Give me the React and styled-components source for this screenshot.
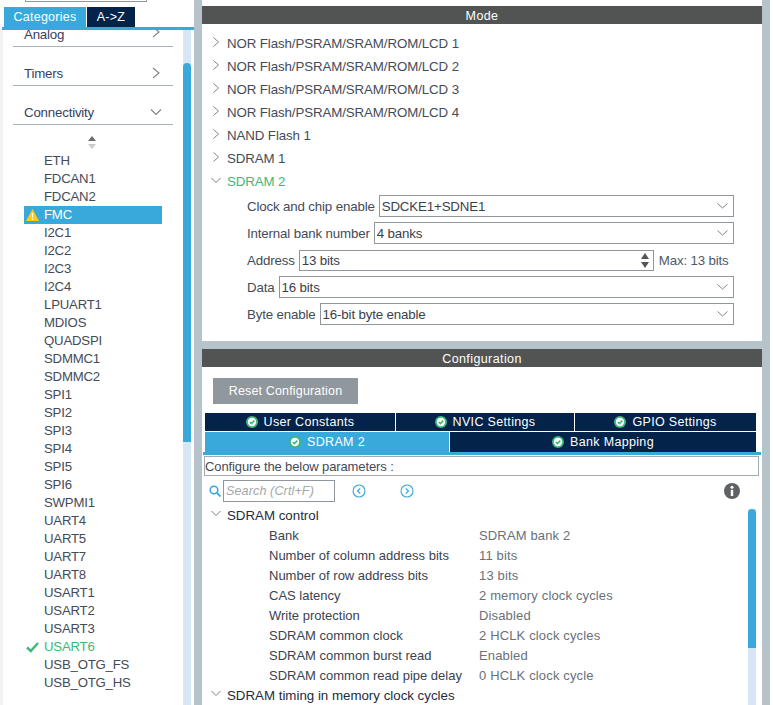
import React from 'react';
import styled, { createGlobalStyle } from 'styled-components';

const GlobalStyle = createGlobalStyle`
  html, body {
    margin: 0;
    padding: 0;
    background: #fff;
  }
  * {
    box-sizing: border-box;
  }
`;

const BLUE = '#39a9dc';
const NAVY = '#03234b';
const GREY = '#b7c3ca';
const GREEN = '#3cb878';
const TEXT = '#444b57';

const Page = styled.div`
  width: 773px;
  height: 705px;
  overflow: hidden;
  display: flex;
  font-family: 'Liberation Sans', Arial, sans-serif;
  font-size: 13.3px;
  letter-spacing: 0;
  color: ${TEXT};
  background: #fff;
`;

const Sidebar = styled.aside`
  width: 194px;
  flex: none;
  display: flex;
  flex-direction: column;
  background: #fff;
`;

const SearchStub = styled.div`
  width: 122px;
  height: 2px;
  margin-left: 25px;
  border: 1px solid #8f969c;
  border-top: 0;
`;

const TabStrip = styled.div`
  display: flex;
  gap: 1px;
  margin: 5px 0 0 4px;
  height: 20px;
`;

const TopTab = styled.div`
  width: ${p => p.$w}px;
  background: ${p => (p.$active ? BLUE : NAVY)};
  color: #fff;
  font-size: 12.5px;
  letter-spacing: 0.25px;
  line-height: 20px;
  text-align: center;
`;

const TabRule = styled.div`
  height: 3px;
  margin-left: 2px;
  background: ${BLUE};
`;

const SideBody = styled.div`
  flex: 1;
  min-height: 0;
  display: flex;
  padding-left: 3px;
  background: linear-gradient(to right, #f2f2f2 3px, #fff 3px);
`;

const SideScroll = styled.div`
  width: 180px;
  flex: none;
  overflow: hidden;
`;

const Category = styled.div`
  height: ${p => p.$h}px;
  margin-left: 10px;
  width: 160px;
  padding: 0 11px;
  border-bottom: 1px solid #a9b3ba;
  display: flex;
  align-items: flex-end;
  justify-content: space-between;
  overflow: hidden;
  color: #37415f;
  font-size: 13.3px;
  letter-spacing: -0.2px;
  line-height: 23px;
`;

const CatChevron = styled.svg`
  width: 12px;
  height: 12px;
  margin: 0 0 ${p => p.$mb}px 0;
  flex: none;
  fill: none;
  stroke: #7d8388;
  stroke-width: 1.1;
`;

const SortMark = styled.svg`
  display: block;
  width: 10px;
  height: 13px;
  margin: 11px 0 0 84px;
`;

const PeriphList = styled.ul`
  list-style: none;
  margin: 3px 0 0 21px;
  padding: 0;
  width: 138px;
`;

const Periph = styled.li`
  height: 18px;
  line-height: 18px;
  padding-left: 20px;
  position: relative;
  font-size: 13.2px;
  letter-spacing: -0.2px;
  background: ${p => (p.$selected ? BLUE : 'transparent')};
  color: ${p => (p.$selected ? '#fff' : p.$ok ? GREEN : TEXT)};
`;

const PeriphIcon = styled.svg`
  position: absolute;
  left: 2px;
  top: 3px;
  width: 13px;
  height: 12px;
`;

const Track = styled.div`
  width: 8px;
  flex: none;
  background: #d6e6f4;
  padding-top: ${p => p.$top}px;
`;

const Thumb = styled.div`
  height: ${p => p.$h}px;
  background: ${BLUE};
  border-radius: 4px 4px 0 0;
`;

const Gutter = styled.div`
  width: 8px;
  flex: none;
  background: ${GREY};
`;

const Main = styled.main`
  width: 560px;
  flex: none;
  display: flex;
  flex-direction: column;
`;

const ModePanel = styled.section`
  height: 341px;
  flex: none;
  padding-top: 6px;
  background: #fff;
`;

const PanelTitle = styled.h2`
  margin: 0;
  height: 18px;
  background: #525453;
  color: #fff;
  font-size: 12.5px;
  font-weight: 400;
  letter-spacing: 0.4px;
  line-height: 20px;
  text-align: center;
`;

const Tree = styled.div`
  padding: 8px 0 0 9px;
`;

const TreeRow = styled.div`
  height: 23px;
  display: flex;
  align-items: center;
  gap: 6px;
  font-size: 13.3px;
  letter-spacing: -0.1px;
  color: ${p => (p.$active ? GREEN : TEXT)};
`;

const TreeChevron = styled.svg`
  width: 10px;
  height: 10px;
  margin-top: -4px;
  flex: none;
  fill: none;
  stroke: #7d8388;
  stroke-width: 1;
`;

const FormBlock = styled.div`
  padding: 2px 28px 0 45px;
  display: flex;
  flex-direction: column;
  gap: 5px;
`;

const FormRow = styled.div`
  height: 22px;
  display: flex;
  align-items: center;
  gap: 4px;
  font-size: 13.3px;
  letter-spacing: -0.15px;
  white-space: nowrap;
`;

const Field = styled.div`
  flex: 1;
  height: 22px;
  display: flex;
  align-items: center;
  justify-content: space-between;
  padding: 0 5px 0 2px;
  border: 1px solid #8f969c;
  color: #3a3f4a;
`;

const SpinField = styled(Field)`
  flex: none;
  width: 355px;
  height: 21px;
  padding: 0 4px 0 2px;
`;

const MaxNote = styled.span`
  margin-left: 1px;
  color: #4f5a68;
`;

const FieldIcon = styled.svg`
  flex: none;
  fill: none;
  stroke: #80868b;
  stroke-width: 1;
`;

const PanelGap = styled.div`
  height: 8px;
  flex: none;
  background: ${GREY};
`;

const ConfigPanel = styled.section`
  flex: 1;
  min-height: 0;
  display: flex;
  flex-direction: column;
  overflow: hidden;
  background: #fff;
`;

const ResetButton = styled.button`
  display: block;
  width: 145px;
  height: 26px;
  margin: 11px 0 0 11px;
  padding: 0;
  border: 0;
  background: #90979d;
  color: #fff;
  font-family: inherit;
  font-size: 12.5px;
  letter-spacing: 0.16px;
`;

const TabRows = styled.div`
  margin: 9px 0 0 3px;
  width: 551px;
  display: flex;
  flex-direction: column;
  gap: 1px;
`;

const TabRow = styled.div`
  display: flex;
  gap: 1px;
  height: ${p => p.$h}px;
`;

const ConfigTab = styled.div`
  width: ${p => p.$w}px;
  display: flex;
  align-items: center;
  justify-content: center;
  gap: 6px;
  background: ${p => (p.$active ? BLUE : NAVY)};
  color: #fff;
  font-size: 12.5px;
  letter-spacing: 0.33px;
`;

const OkIcon = styled.svg`
  width: 12px;
  height: 12px;
  flex: none;
`;

const BlueRule = styled.div`
  height: 3px;
  width: 558px;
  margin-left: 1px;
  flex: none;
  background: ${BLUE};
`;

const HintBox = styled.div`
  height: 20px;
  width: 555px;
  margin: 1px 0 0 2px;
  flex: none;
  padding-left: 0;
  border: 1px solid #a3abb1;
  line-height: 19px;
  font-size: 13px;
  letter-spacing: -0.11px;
`;

const SearchRow = styled.div`
  height: 22px;
  flex: none;
  margin: 4px 0 0 7px;
  width: 531px;
  display: flex;
  align-items: center;
`;

const SearchIcon = styled.svg`
  width: 12px;
  height: 12px;
  margin-right: 2px;
  flex: none;
`;

const SearchBox = styled.div`
  width: 112px;
  height: 22px;
  border: 1px solid #8f969c;
  padding-left: 2px;
  line-height: 20px;
  color: #a4a8ac;
  font-size: 12.6px;
  font-style: italic;
  letter-spacing: 0.1px;
`;

const NavButton = styled.svg`
  width: 14px;
  height: 14px;
  margin-left: ${p => p.$ml}px;
  flex: none;
  fill: none;
  stroke: ${BLUE};
`;

const InfoIcon = styled.svg`
  width: 16px;
  height: 16px;
  margin-left: auto;
  flex: none;
`;

const ParamArea = styled.div`
  flex: 1;
  min-height: 0;
  display: flex;
  padding-top: 3px;
`;

const ParamList = styled.div`
  width: 546px;
  flex: none;
  overflow: hidden;
  padding-left: 9px;
`;

const ParamHead = styled.div`
  height: 20px;
  display: flex;
  align-items: center;
  gap: 6px;
  color: #222b3d;
  font-size: 13.3px;
`;

const ParamRow = styled.div`
  height: 20px;
  display: flex;
  align-items: center;
  padding-left: 58px;
  font-size: 13px;
`;

const ParamName = styled.span`
  width: 210px;
  flex: none;
  color: #3b4250;
`;

const ParamValue = styled.span`
  color: #6a7079;
  letter-spacing: 0.15px;
`;

const ParamTrack = styled(Track)`
  background: linear-gradient(to bottom, #fff 4px, #d6e6f4 4px);
`;

const periphs = [
  'ETH', 'FDCAN1', 'FDCAN2', 'FMC', 'I2C1', 'I2C2', 'I2C3', 'I2C4', 'LPUART1', 'MDIOS',
  'QUADSPI', 'SDMMC1', 'SDMMC2', 'SPI1', 'SPI2', 'SPI3', 'SPI4', 'SPI5', 'SPI6', 'SWPMI1',
  'UART4', 'UART5', 'UART7', 'UART8', 'USART1', 'USART2', 'USART3', 'USART6', 'USB_OTG_FS',
  'USB_OTG_HS',
];

const modes = [
  'NOR Flash/PSRAM/SRAM/ROM/LCD 1',
  'NOR Flash/PSRAM/SRAM/ROM/LCD 2',
  'NOR Flash/PSRAM/SRAM/ROM/LCD 3',
  'NOR Flash/PSRAM/SRAM/ROM/LCD 4',
  'NAND Flash 1',
  'SDRAM 1',
];

const params = [
  ['Bank', 'SDRAM bank 2'],
  ['Number of column address bits', '11 bits'],
  ['Number of row address bits', '13 bits'],
  ['CAS latency', '2 memory clock cycles'],
  ['Write protection', 'Disabled'],
  ['SDRAM common clock', '2 HCLK clock cycles'],
  ['SDRAM common burst read', 'Enabled'],
  ['SDRAM common read pipe delay', '0 HCLK clock cycle'],
];

const Right = () => <TreeChevron viewBox="0 0 10 10"><path d="M2.5 0.5 L7.5 5 L2.5 9.5" /></TreeChevron>;
const Down = () => <TreeChevron viewBox="0 0 10 10"><path d="M0.5 3 L5 7.5 L9.5 3" /></TreeChevron>;

const SelectArrow = () => (
  <FieldIcon width="11" height="6" viewBox="0 0 11 6"><path d="M0.5 0.5 L5.5 5 L10.5 0.5" /></FieldIcon>
);

const Ok = () => (
  <OkIcon viewBox="0 0 12 12">
    <circle cx="6" cy="6" r="6" fill="#3cb878" />
    <circle cx="6" cy="6" r="4.2" fill="#fff" />
    <path d="M3.8 6 L5.4 7.6 L8.3 4.6" fill="none" stroke="#3cb878" strokeWidth="1.6" />
  </OkIcon>
);

const PeriphMark = ({ name }) => {
  if (name === 'FMC') {
    return (
      <PeriphIcon viewBox="0 0 13 12">
        <path d="M6.5 0 L13 12 L0 12 Z" fill="#fbcf0a" />
        <path d="M6.5 4 V8.5 M6.5 9.5 V11" stroke="#fff" strokeWidth="1.2" />
      </PeriphIcon>
    );
  }
  if (name === 'USART6') {
    return (
      <PeriphIcon viewBox="0 0 13 12">
        <path d="M1 6.5 L4.8 10 L12 2" fill="none" stroke="#3cb878" strokeWidth="2.4" />
      </PeriphIcon>
    );
  }
  return null;
};

export default function App() {
  return (
    <Page>
      <GlobalStyle />
      <Sidebar>
        <SearchStub />
        <TabStrip>
          <TopTab $active $w={82}>Categories</TopTab>
          <TopTab $w={48}>A-&gt;Z</TopTab>
        </TabStrip>
        <TabRule />
        <SideBody>
          <SideScroll>
            <Category $h={17}>
              Analog
              <CatChevron $mb={8} viewBox="0 0 12 12"><path d="M3 1 L9 6 L3 11" /></CatChevron>
            </Category>
            <Category $h={39}>
              Timers
              <CatChevron $mb={6} viewBox="0 0 12 12"><path d="M3 1 L9 6 L3 11" /></CatChevron>
            </Category>
            <Category $h={39}>
              Connectivity
              <CatChevron $mb={6} viewBox="0 0 12 12"><path d="M1 3.5 L6 8.5 L11 3.5" /></CatChevron>
            </Category>
            <SortMark viewBox="0 0 10 13">
              <path d="M5 0 L9 5 H1 Z" fill="#6a6e72" />
              <path d="M5 13 L9 8 H1 Z" fill="#c9cccf" />
            </SortMark>
            <PeriphList>
              {periphs.map(name => (
                <Periph key={name} $selected={name === 'FMC'} $ok={name === 'USART6'}>
                  <PeriphMark name={name} />
                  {name}
                </Periph>
              ))}
            </PeriphList>
          </SideScroll>
          <Track $top={33}><Thumb $h={379} /></Track>
        </SideBody>
      </Sidebar>
      <Gutter />
      <Main>
        <ModePanel>
          <PanelTitle>Mode</PanelTitle>
          <Tree>
            {modes.map(m => (
              <TreeRow key={m}><Right />{m}</TreeRow>
            ))}
            <TreeRow $active><Down />SDRAM 2</TreeRow>
          </Tree>
          <FormBlock>
            <FormRow>
              Clock and chip enable
              <Field>SDCKE1+SDNE1<SelectArrow /></Field>
            </FormRow>
            <FormRow>
              Internal bank number
              <Field>4 banks<SelectArrow /></Field>
            </FormRow>
            <FormRow>
              Address
              <SpinField>
                13 bits
                <FieldIcon width="8" height="15" viewBox="0 0 8 15">
                  <path d="M4 0 L8 6 H0 Z" fill="#555" stroke="none" />
                  <path d="M4 15 L8 9 H0 Z" fill="#555" stroke="none" />
                </FieldIcon>
              </SpinField>
              <MaxNote>Max: 13 bits</MaxNote>
            </FormRow>
            <FormRow>
              Data
              <Field>16 bits<SelectArrow /></Field>
            </FormRow>
            <FormRow>
              Byte enable
              <Field>16-bit byte enable<SelectArrow /></Field>
            </FormRow>
          </FormBlock>
        </ModePanel>
        <PanelGap />
        <ConfigPanel>
          <PanelTitle>Configuration</PanelTitle>
          <ResetButton>Reset Configuration</ResetButton>
          <TabRows>
            <TabRow $h={18}>
              <ConfigTab $w={190}><Ok />User Constants</ConfigTab>
              <ConfigTab $w={178}><Ok />NVIC Settings</ConfigTab>
              <ConfigTab $w={181}><Ok />GPIO Settings</ConfigTab>
            </TabRow>
            <TabRow $h={20}>
              <ConfigTab $w={244} $active><Ok />SDRAM 2</ConfigTab>
              <ConfigTab $w={306}><Ok />Bank Mapping</ConfigTab>
            </TabRow>
          </TabRows>
          <BlueRule />
          <HintBox>Configure the below parameters :</HintBox>
          <SearchRow>
            <SearchIcon viewBox="0 0 12 12">
              <circle cx="5" cy="5" r="3.8" fill="none" stroke="#39a9dc" strokeWidth="1.6" />
              <path d="M8 8 L11.5 11.5" stroke="#39a9dc" strokeWidth="1.8" />
            </SearchIcon>
            <SearchBox>Search (Crtl+F)</SearchBox>
            <NavButton $ml={17} viewBox="0 0 14 14">
              <circle cx="7" cy="7" r="6" strokeWidth="1.1" />
              <path d="M8.2 4.4 L5.6 7 L8.2 9.6" strokeWidth="1.3" />
            </NavButton>
            <NavButton $ml={34} viewBox="0 0 14 14">
              <circle cx="7" cy="7" r="6" strokeWidth="1.1" />
              <path d="M5.8 4.4 L8.4 7 L5.8 9.6" strokeWidth="1.3" />
            </NavButton>
            <InfoIcon viewBox="0 0 16 16">
              <circle cx="8" cy="8" r="8" fill="#5f6366" />
              <circle cx="8" cy="4.2" r="1.5" fill="#fff" />
              <rect x="6.8" y="6.8" width="2.4" height="6.2" fill="#fff" />
            </InfoIcon>
          </SearchRow>
          <ParamArea>
            <ParamList>
              <ParamHead><Down />SDRAM control</ParamHead>
              {params.map(([name, value]) => (
                <ParamRow key={name}>
                  <ParamName>{name}</ParamName>
                  <ParamValue>{value}</ParamValue>
                </ParamRow>
              ))}
              <ParamHead><Down />SDRAM timing in memory clock cycles</ParamHead>
            </ParamList>
            <ParamTrack $top={4}><Thumb $h={139} /></ParamTrack>
          </ParamArea>
        </ConfigPanel>
      </Main>
      <Gutter />
    </Page>
  );
}
